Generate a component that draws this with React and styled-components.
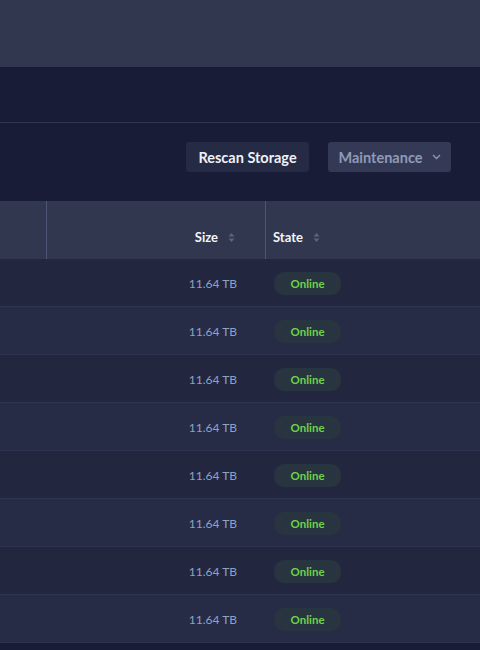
import React from 'react';
import styled, { createGlobalStyle } from 'styled-components';

const GlobalStyle = createGlobalStyle`
    html, body {
        margin:0;
        padding:0;
        background-color:#181c36;
        font-family:Lato, "Open Sans", sans-serif;
    }
`;

const Page = styled.div`
    display:flex;
    flex-direction:column;
    width:480px;
    min-height:650px;
    background-color:#181c36;
    overflow:hidden;
`;

const TopBand = styled.div`
    height:67px;
    background-color:#31374f;
`;

const SubBand = styled.div`
    height:55px;
    border-bottom:1px solid #2f3550;
`;

const Toolbar = styled.div`
    display:flex;
    justify-content:flex-end;
    align-items:flex-start;
    gap:19px;
    height:78px;
    box-sizing:border-box;
    padding:19px 29px 0 0;
`;

const Button = styled.button`
    display:flex;
    align-items:center;
    justify-content:center;
    gap:9px;
    width:123px;
    height:30px;
    border:none;
    border-radius:3px;
    font-family:Lato, "Open Sans", sans-serif;
    font-size:14.5px;
    font-weight:700;
    padding:0;
    background-color:${p => p.$muted ? '#343a55' : '#252a45'};
    color:${p => p.$muted ? '#8e9ab8' : '#eef1f7'};
`;

const Table = styled.div`
    display:flex;
    flex-direction:column;
`;

const HeaderRow = styled.div`
    display:grid;
    grid-template-columns:46px 219px 1fr;
    height:58px;
    background-color:#31374f;
`;

const HeaderCell = styled.div`
    display:flex;
    align-items:flex-end;
    justify-content:${p => p.$right ? 'flex-end' : 'flex-start'};
    gap:10px;
    padding:0 ${p => p.$right ? '30px' : '0'} 14px ${p => p.$right ? '0' : '7px'};
    border-left:${p => p.$first ? 'none' : '1px solid #4e5778'};
    color:#f2f4fa;
    font-size:13px;
    font-weight:700;
    line-height:16px;
`;

const Row = styled.div`
    display:grid;
    grid-template-columns:46px 219px 1fr;
    height:48px;
    box-sizing:border-box;
    border-bottom:1px solid #2d3350;
    background-color:${p => p.$alt ? '#262b46' : '#22273f'};
    align-items:center;
`;

const SizeCell = styled.div`
    text-align:right;
    padding:1px 28px 0 0;
    color:#8fa2c6;
    font-size:12px;
`;

const StateCell = styled.div`
    padding-left:9px;
`;

const Badge = styled.span`
    display:inline-flex;
    align-items:center;
    justify-content:center;
    width:67px;
    height:23px;
    border-radius:10px;
    background-color:#28343f;
    color:#6fd24b;
    font-size:11.5px;
    font-weight:700;
    margin-top:1px;
`;

function SortIcon() {
    return (
        <svg width="7" height="11" viewBox="0 0 7 11" style={{marginBottom: 2}}>
            <path d="M3.5 1 L6.5 4.5 L0.5 4.5 Z" fill="#5a6482"/>
            <path d="M3.5 10 L6.5 6.5 L0.5 6.5 Z" fill="#5a6482"/>
        </svg>
    );
}

function Chevron() {
    return (
        <svg width="9" height="6" viewBox="0 0 9 6">
            <path d="M1 1 L4.5 4.5 L8 1" stroke="#8e9ab8" strokeWidth="1.3" fill="none"/>
        </svg>
    );
}

const disks = Array.from({length: 8}, () => ({size: '11.64 TB', state: 'Online'}));

export default function App() {
    return (
        <Page>
            <GlobalStyle />
            <TopBand />
            <SubBand />
            <Toolbar>
                <Button>Rescan Storage</Button>
                <Button $muted>Maintenance <Chevron /></Button>
            </Toolbar>
            <Table>
                <HeaderRow>
                    <HeaderCell $first />
                    <HeaderCell $right>Size <SortIcon /></HeaderCell>
                    <HeaderCell>State <SortIcon /></HeaderCell>
                </HeaderRow>
                {disks.map((d, i) => (
                    <Row key={i} $alt={i % 2 === 1}>
                        <div />
                        <SizeCell>{d.size}</SizeCell>
                        <StateCell><Badge>{d.state}</Badge></StateCell>
                    </Row>
                ))}
            </Table>
        </Page>
    );
}
